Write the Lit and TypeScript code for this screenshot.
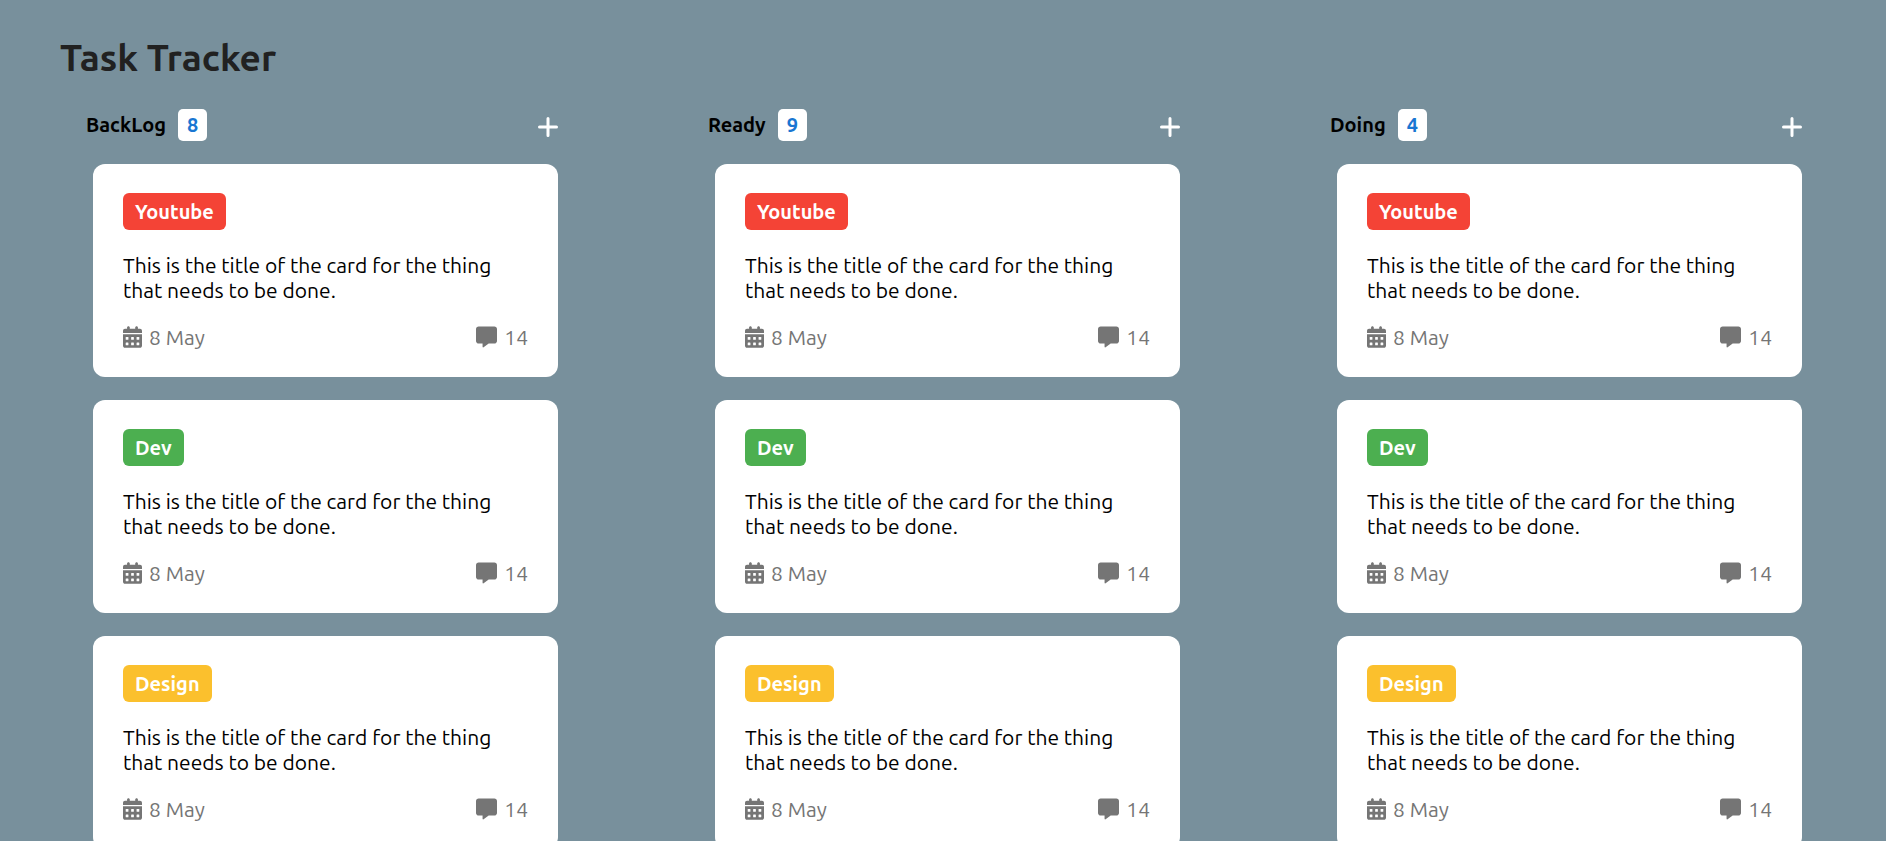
import { LitElement, html, css, svg } from "lit";
import { customElement, property } from "lit/decorators.js";
import { classMap } from "lit/directives/class-map.js";

interface Task {
  tag: string;
  title: string;
  date: string;
  comments: number;
}

interface Column {
  name: string;
  count: number;
}

const TITLE = "This is the title of the card for the thing that needs to be done.";

const TASKS: Task[] = ["Youtube", "Dev", "Design"].map((tag) => ({
  tag,
  title: TITLE,
  date: "8 May",
  comments: 14,
}));

const COLUMNS: Column[] = [
  { name: "BackLog", count: 8 },
  { name: "Ready", count: 9 },
  { name: "Doing", count: 4 },
];

// Upper-left corners of the six day cells in the calendar icon.
const CELLS = [64, 192, 320].flatMap((x) => [256, 384].map((y) => [x, y]));

@customElement("task-card")
class TaskCard extends LitElement {
  @property({ attribute: false }) task!: Task;

  static styles = css`
    :host {
      display: block;
      padding: 29px 30px 27px;
      border-radius: 12px;
      background: #fff;
      color: #000;
    }
    .tag {
      display: inline-block;
      vertical-align: top;
      padding: 6px 12px;
      border-radius: 6px;
      color: #fff;
      font-weight: 700;
      font-size: 20px;
      line-height: 25px;
      background: #f44336;
    }
    .tag.dev {
      background: #4caf50;
    }
    .tag.design {
      background: #fbc02d;
    }
    .title {
      margin: 23px 0 21px;
      font-size: 21px;
      font-weight: 400;
      line-height: 25px;
    }
    .meta {
      display: flex;
      justify-content: space-between;
      color: #757575;
      font-size: 21px;
      line-height: 26px;
    }
    .item {
      display: flex;
      align-items: center;
      gap: 7px;
    }
    svg {
      display: block;
      fill: currentColor;
    }
  `;

  render() {
    const { tag, title, date, comments } = this.task;
    const kind = tag.toLowerCase();
    return html`
      <span class=${classMap({ tag: true, [kind]: true })}>${tag}</span>
      <p class="title">${title}</p>
      <div class="meta">
        <span class="item">
          <svg width="19" height="22" viewBox="0 0 448 512" aria-hidden="true">
            <path
              d="M128 0c17.700 0 32 14.300 32 32V64H288V32c0-17.700 14.300-32 32-32s32 14.300 32 32V64h48c26.500 0 48 21.500 48 48v48H0V112C0 85.500 21.500 64 48 64H96V32c0-17.700 14.300-32 32-32zM0 192H448V464c0 26.500-21.500 48-48 48H48c-26.500 0-48-21.500-48-48V192z"
            />
            ${CELLS.map(
              ([x, y]) => svg`<rect x=${x} y=${y} width="64" height="64" rx="12" fill="#fff" />`
            )}
          </svg>
          ${date}
        </span>
        <span class="item">
          <svg width="21" height="22" viewBox="0 0 512 512" aria-hidden="true">
            <path
              d="M64 0C28.700 0 0 28.700 0 64V352c0 35.300 28.700 64 64 64h96v80c0 6.100 3.400 11.600 8.800 14.300s11.900 2.100 16.800-1.500L309.300 416H448c35.300 0 64-28.700 64-64V64c0-35.300-28.700-64-64-64H64z"
            />
          </svg>
          ${comments}
        </span>
      </div>
    `;
  }
}

@customElement("task-column")
class TaskColumn extends LitElement {
  @property({ attribute: false }) column!: Column;

  static styles = css`
    :host {
      display: block;
      min-width: 0;
    }
    .head {
      display: flex;
      align-items: center;
      gap: 12px;
      margin-bottom: 23px;
    }
    .name,
    .count {
      margin: 0;
      color: #000;
      font-size: 20px;
      font-weight: 700;
      line-height: 32px;
    }
    .count {
      padding: 0 9px;
      border-radius: 5px;
      background: #fff;
      color: #1976d2;
    }
    .add {
      margin-left: auto;
      padding: 4px 0 0;
      border: 0;
      background: none;
      color: #fff;
      cursor: pointer;
    }
    .add svg {
      display: block;
      stroke: currentColor;
      stroke-width: 3;
      stroke-linecap: round;
    }
    .cards {
      display: grid;
      gap: 23px;
      padding-left: 7px;
    }
  `;

  render() {
    const { name, count } = this.column;
    return html`
      <header class="head">
        <h2 class="name">${name}</h2>
        <span class="count">${count}</span>
        <button class="add" type="button" aria-label="Add a card to ${name}">
          <svg width="20" height="20" viewBox="0 0 20 20" aria-hidden="true">
            <path d="M10 1.500V18.500M1.500 10H18.500" />
          </svg>
        </button>
      </header>
      <div class="cards">
        ${TASKS.map((task) => html`<task-card .task=${task}></task-card>`)}
      </div>
    `;
  }
}

@customElement("app-root")
class AppRoot extends LitElement {
  static styles = css`
    :host {
      display: block;
      box-sizing: border-box;
      height: 100vh;
      overflow: hidden;
      padding: 37px 84px 0 60px;
      background: #78909c;
      font-family: Ubuntu, "Noto Sans", sans-serif;
    }
    .heading {
      margin: 0 0 30px;
      color: #212121;
      font-size: 37px;
      font-weight: 700;
      line-height: 42px;
    }
    .board {
      display: grid;
      grid-template-columns: repeat(3, minmax(0, 1fr));
      gap: 150px;
      padding-left: 26px;
    }
  `;

  render() {
    return html`
      <h1 class="heading">Task Tracker</h1>
      <main class="board">
        ${COLUMNS.map((column) => html`<task-column .column=${column}></task-column>`)}
      </main>
    `;
  }
}
